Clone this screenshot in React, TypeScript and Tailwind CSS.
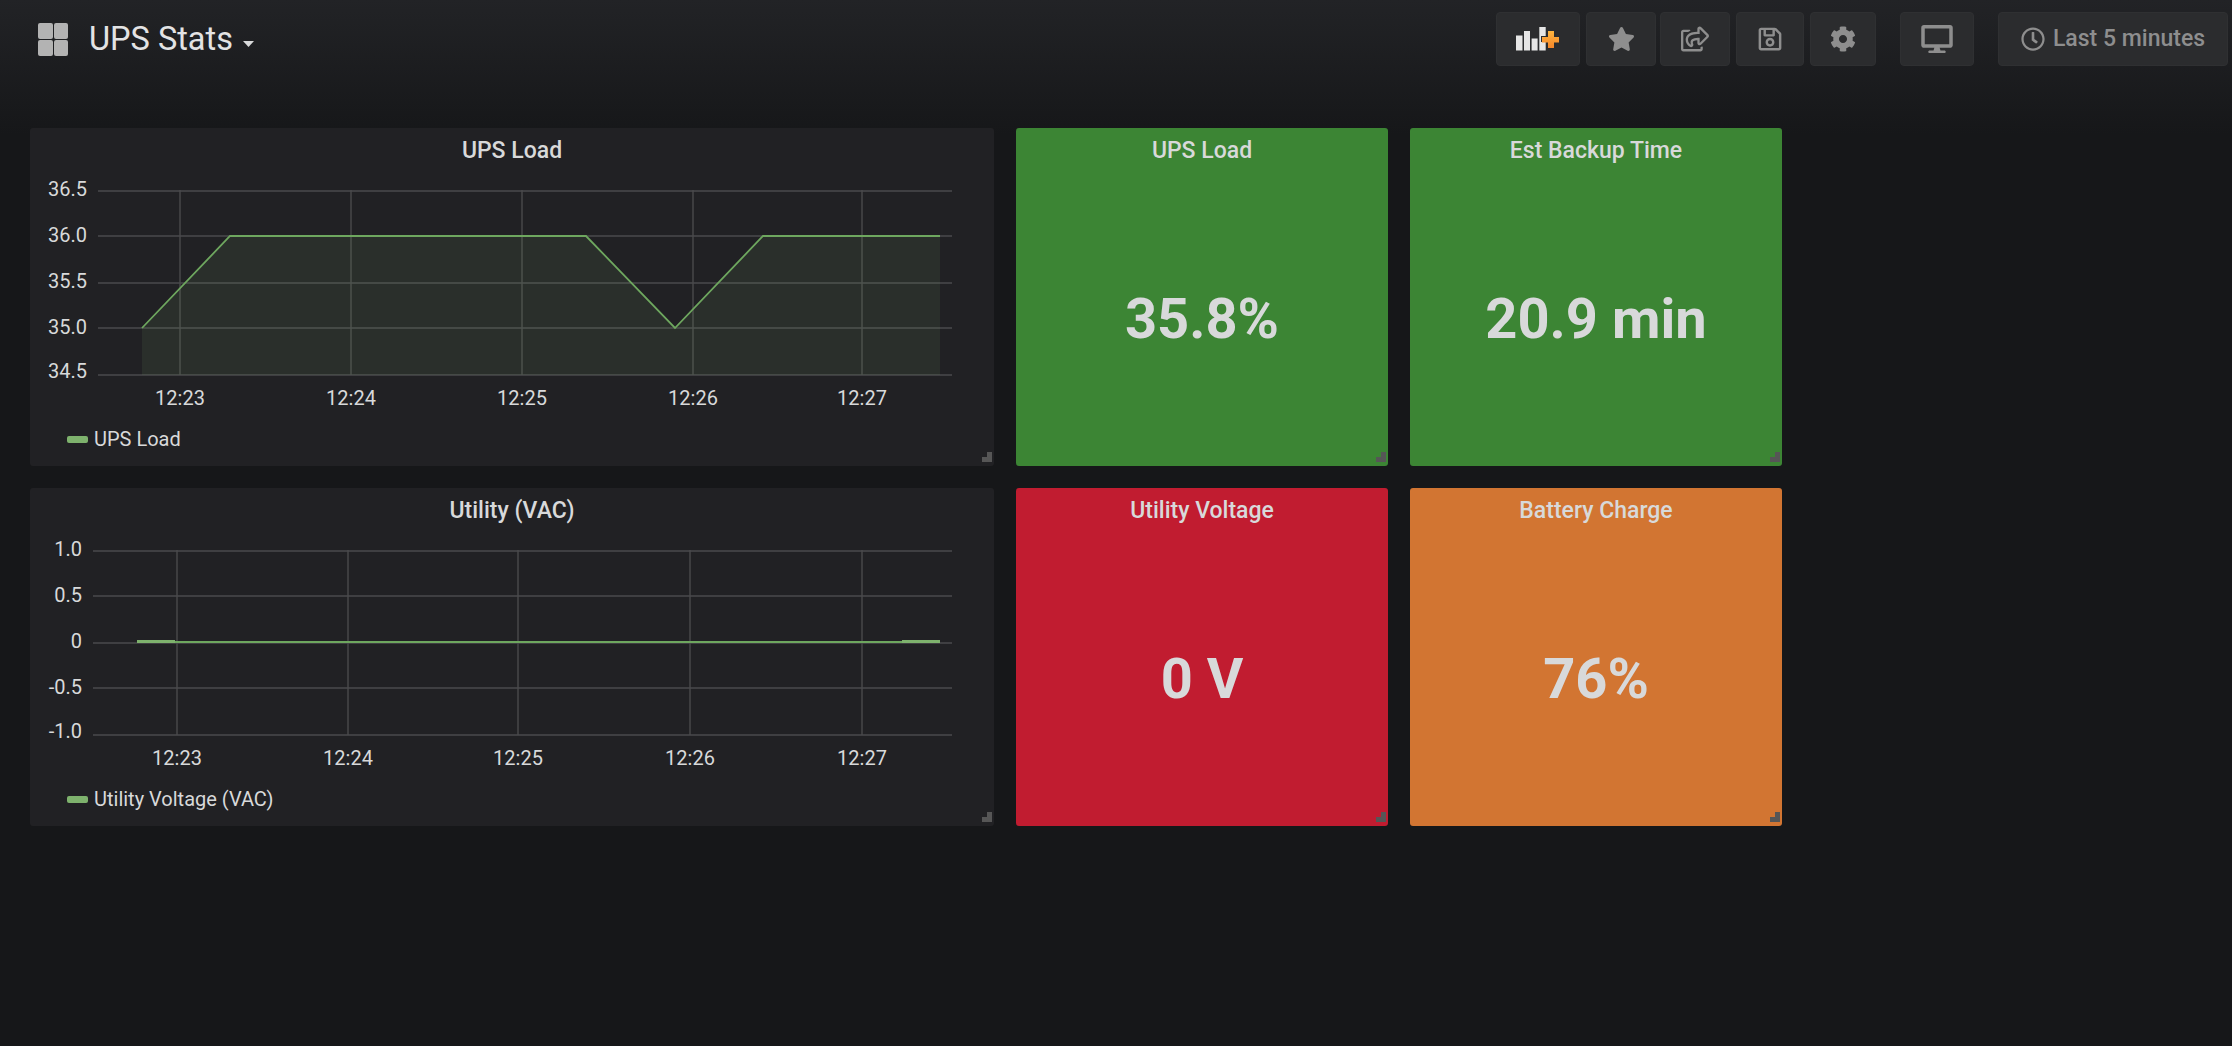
import React from 'react';
import { FaStar, FaRegShareSquare, FaRegSave, FaCog, FaDesktop, FaRegClock } from 'react-icons/fa';

type Label = { text: string; y: number };

type GraphProps = {
  title: string;
  legend: string;
  gridLeft: number;
  labelRight: number;
  yLabels: Label[];
  xLines: number[];
  points?: string;
  area?: string;
  flat?: boolean;
};

const gridYs = [19, 64, 111, 156, 203];
const timeLabels = ['12:23', '12:24', '12:25', '12:26', '12:27'];

const ResizeHandle = () => (
  <div className="absolute right-[2px] bottom-[4px] h-[10px] w-[10px]">
    <div className="absolute right-0 bottom-0 h-full w-[5px] bg-[#565656]" />
    <div className="absolute right-0 bottom-0 h-[5px] w-full bg-[#565656]" />
  </div>
);

const GraphPanel: React.FC<GraphProps> = ({ title, legend, gridLeft, labelRight, yLabels, xLines, points, area, flat }) => (
  <div className="relative flex h-[338px] flex-col rounded-[3px] bg-[#212124]">
    <div className="flex h-[44px] items-center justify-center pt-[2px] text-[23px] font-medium text-[#d8d9da]">{title}</div>
    <svg width="964" height="243" viewBox="0 0 964 243" className="block">
      {gridYs.map((y) => (
        <line key={y} x1={gridLeft} x2="922" y1={y} y2={y} stroke="#4a4a4c" strokeWidth="1.6" />
      ))}
      {xLines.map((x) => (
        <line key={x} x1={x} x2={x} y1="18" y2="203" stroke="#4a4a4c" strokeWidth="1.4" />
      ))}
      {area && <polygon points={area} fill="#7eb26d" fillOpacity="0.1" />}
      {points && <polyline points={points} fill="none" stroke="#6ea75f" strokeWidth="1.8" />}
      {flat && (
        <>
          <line x1="107" x2="145" y1="109.5" y2="109.5" stroke="#7eb26d" strokeWidth="3" />
          <line x1="145" x2="872" y1="110" y2="110" stroke="#6ea75f" strokeWidth="2" />
          <line x1="872" x2="910" y1="109.5" y2="109.5" stroke="#7eb26d" strokeWidth="3" />
        </>
      )}
      {yLabels.map((l) => (
        <text key={l.text} x={labelRight} y={l.y} textAnchor="end" dominantBaseline="central" fontSize="20" fill="#d8d9da">
          {l.text}
        </text>
      ))}
      {xLines.map((x, i) => (
        <text key={x} x={x} y="226" textAnchor="middle" dominantBaseline="central" fontSize="20" fill="#d8d9da">
          {timeLabels[i]}
        </text>
      ))}
    </svg>
    <div className="flex h-[46px] items-center pt-[2px] pl-[37px] text-[20px] text-[#d8d9da]">
      <span className="mr-[6px] h-[7px] w-[21px] rounded-[2px] bg-[#7eb26d]" />
      {legend}
    </div>
    <ResizeHandle />
  </div>
);

const StatPanel: React.FC<{ title: string; value: string; color: string }> = ({ title, value, color }) => (
  <div className={`relative flex h-[338px] flex-col rounded-[3px] ${color}`}>
    <div className="flex h-[44px] items-center justify-center pt-[2px] text-[23px] font-medium text-[#d8d9da]">{title}</div>
    <div className="flex flex-1 items-center justify-center text-[56px] leading-none font-bold text-[#d8d9da]">{value}</div>
    <ResizeHandle />
  </div>
);

const ToolButton: React.FC<{ width: string; children: React.ReactNode }> = ({ width, children }) => (
  <div className={`flex h-[54px] items-center justify-center rounded-[4px] border border-[#2f3032] bg-[#2b2c2e] text-[#8e8e8e] ${width}`}>
    {children}
  </div>
);

const AddPanelIcon = () => (
  <svg width="44" height="24" viewBox="0 0 44 24">
    <defs>
      <linearGradient id="plus" x1="0" y1="0" x2="0" y2="1">
        <stop offset="0" stopColor="#ffb63f" />
        <stop offset="1" stopColor="#f5862a" />
      </linearGradient>
    </defs>
    <rect x="0" y="8.5" width="6.5" height="15" fill="#e6e6e6" />
    <rect x="8" y="4" width="6" height="19.5" fill="#e6e6e6" />
    <rect x="15.6" y="11.5" width="6" height="12" fill="#e6e6e6" />
    <rect x="23.3" y="0" width="6.4" height="23.5" fill="#e6e6e6" />
    <path d="M33 3h7v6.500h5v6h-5v7h-7v-7h-7v-6h7z" fill="#2b2c2e" transform="translate(-1 -0.500)" />
    <path d="M33 4h6v6h5v5.500h-5v5.500h-6v-5.500h-6v-5.500h6z" fill="url(#plus)" transform="translate(-1 0)" />
  </svg>
);

export default function App() {
  return (
    <div className="h-[1046px] w-full overflow-hidden bg-[linear-gradient(#222326_0px,#161719_135px)] font-['Roboto',sans-serif]">
      <header className="flex h-[128px] items-start justify-between pr-[4px]">
        <div className="flex items-center pt-[20px] pl-[38px]">
          <div className="grid h-[33px] w-[30px] grid-cols-2 grid-rows-2 gap-[1px]">
            <span className="rounded-[2px] bg-[#b3b3b3]" />
            <span className="rounded-[2px] bg-[#b3b3b3]" />
            <span className="rounded-[2px] bg-[#b3b3b3]" />
            <span className="rounded-[2px] bg-[#b3b3b3]" />
          </div>
          <span className="ml-[21px] text-[32.500px] leading-[38px] text-[#e3e3e4]">UPS Stats</span>
          <svg width="11" height="6" viewBox="0 0 11 6" className="mt-[9px] ml-[10px]">
            <path d="M0 0h11L5.500 6z" fill="#d8d9da" />
          </svg>
        </div>
        <div className="flex pt-[12px]">
          <ToolButton width="w-[84px]"><AddPanelIcon /></ToolButton>
          <div className="ml-[6px]"><ToolButton width="w-[70px]"><FaStar className="h-[26px] w-[27px]" /></ToolButton></div>
          <div className="ml-[4px]"><ToolButton width="w-[70px]"><FaRegShareSquare className="h-[26px] w-[28px]" /></ToolButton></div>
          <div className="ml-[6px]"><ToolButton width="w-[68px]"><FaRegSave className="h-[26px] w-[26px]" /></ToolButton></div>
          <div className="ml-[6px]"><ToolButton width="w-[66px]"><FaCog className="h-[26px] w-[26px]" /></ToolButton></div>
          <div className="ml-[24px]"><ToolButton width="w-[74px]"><FaDesktop className="h-[28px] w-[32px]" /></ToolButton></div>
          <div className="ml-[24px]">
            <ToolButton width="w-[230px]">
              <FaRegClock className="mr-[8px] h-[24px] w-[24px]" />
              <span className="text-[23px] font-medium">Last 5 minutes</span>
            </ToolButton>
          </div>
        </div>
      </header>

      <main className="grid grid-cols-[964px_372px_372px] gap-[22px] pl-[30px]">
        <GraphPanel
          title="UPS Load"
          legend="UPS Load"
          gridLeft={68}
          labelRight={57}
          xLines={[150, 321, 492, 663, 832]}
          yLabels={[
            { text: '36.5', y: 17 },
            { text: '36.0', y: 63 },
            { text: '35.5', y: 109 },
            { text: '35.0', y: 155 },
            { text: '34.5', y: 199 },
          ]}
          points="112,156 200,64 556,64 645,156 733,64 910,64"
          area="112,156 200,64 556,64 645,156 733,64 910,64 910,203 112,203"
        />
        <StatPanel title="UPS Load" value="35.8%" color="bg-[#3c8534]" />
        <StatPanel title="Est Backup Time" value="20.9 min" color="bg-[#3c8534]" />
        <GraphPanel
          title="Utility (VAC)"
          legend="Utility Voltage (VAC)"
          gridLeft={63}
          labelRight={52}
          xLines={[147, 318, 488, 660, 832]}
          yLabels={[
            { text: '1.0', y: 17 },
            { text: '0.5', y: 63 },
            { text: '0', y: 109 },
            { text: '-0.5', y: 155 },
            { text: '-1.0', y: 199 },
          ]}
          flat
        />
        <StatPanel title="Utility Voltage" value="0 V" color="bg-[#c11c30]" />
        <StatPanel title="Battery Charge" value="76%" color="bg-[#d27532]" />
      </main>
    </div>
  );
}
